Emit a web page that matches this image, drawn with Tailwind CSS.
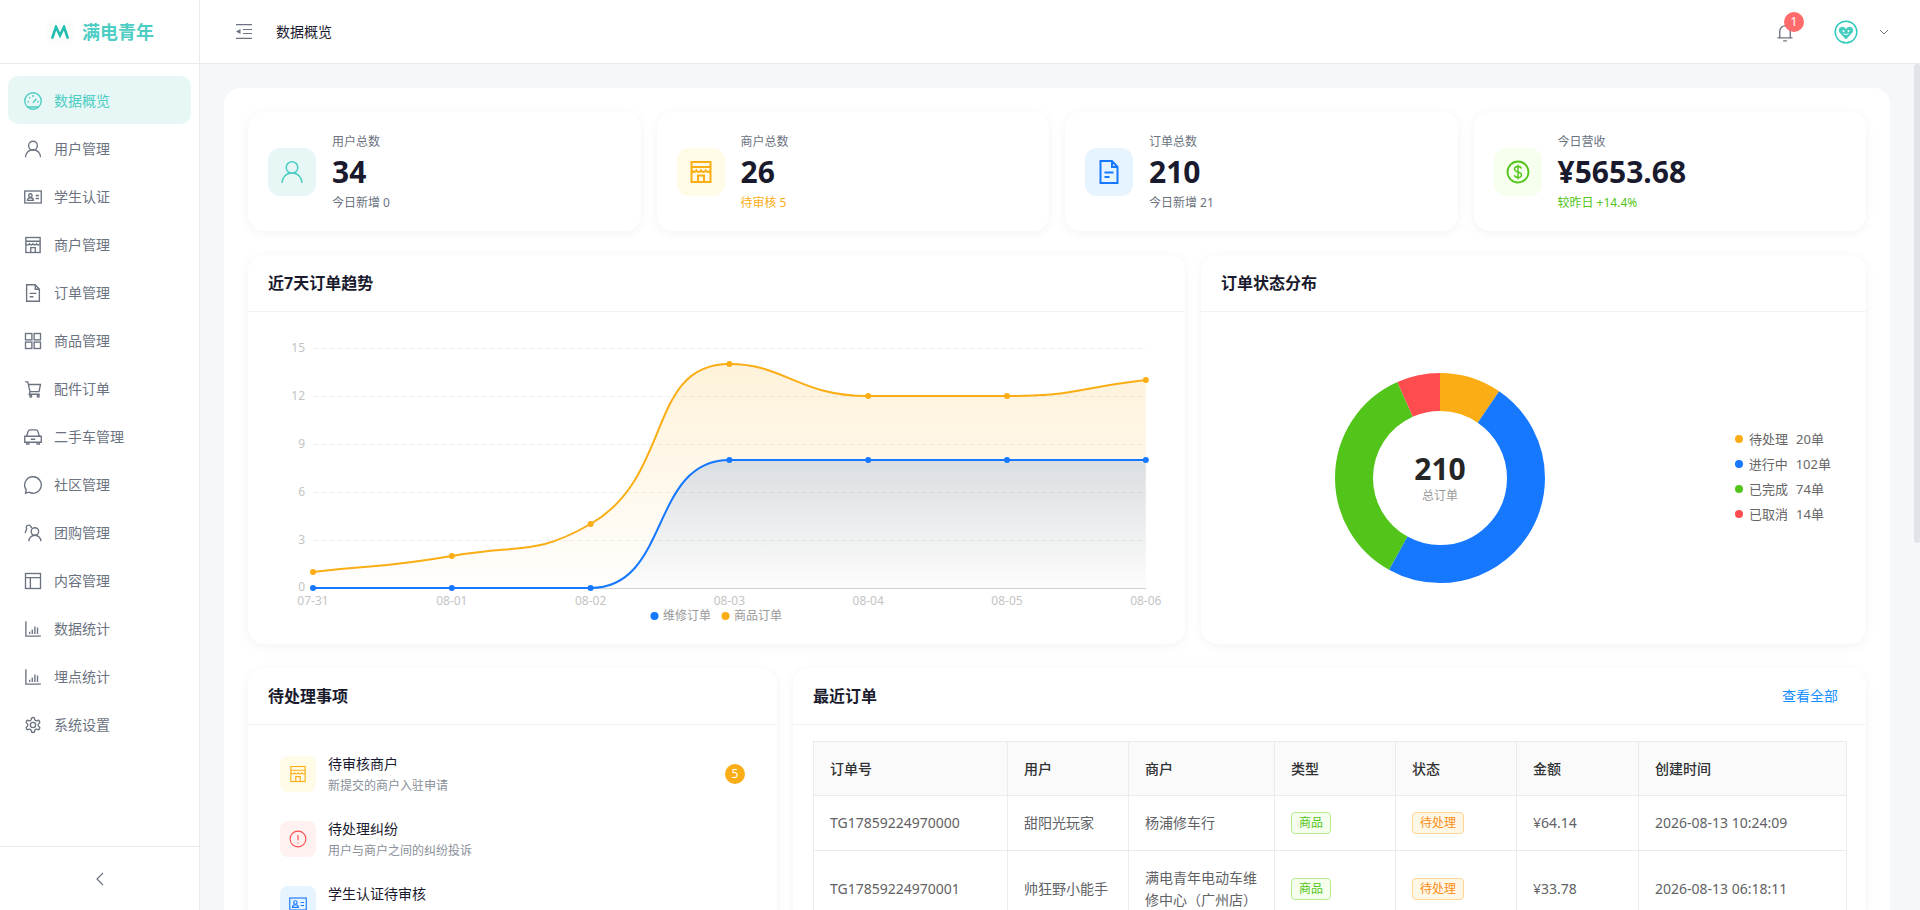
<!DOCTYPE html>
<html lang="zh-CN">
<head>
  <meta charset="UTF-8" />
  <meta name="viewport" content="width=device-width, initial-scale=1.0" />
  <title>满电青年 - 数据概览</title>
  <script src="https://cdn.jsdelivr.net/npm/@tailwindcss/browser@4"></script>
</head>
<body class="h-[910px] overflow-hidden flex bg-[#f5f7fb] font-['Noto_Sans','Noto_Sans_CJK_SC',sans-serif] text-[#1a1a2e]">

  <!-- shared icons -->
  <svg class="hidden" xmlns="http://www.w3.org/2000/svg">
    <symbol id="i-user" viewBox="0 0 24 24"><circle cx="12" cy="7.500" r="5.800"/><path d="M2 23c0-5.500 4-10 10-10s10 4.500 10 10"/></symbol>
    <symbol id="i-card" viewBox="0 0 24 24"><rect x="1" y="4" width="22" height="16"/><circle cx="8.500" cy="10" r="2.300"/><path d="M4.500 16.500c0-2.200 1.800-3.500 4-3.500s4 1.300 4 3.500zM15.500 10h4.500M15.500 14h4.500"/></symbol>
    <symbol id="i-shop" viewBox="0 0 24 24"><rect x="2.500" y="2" width="19" height="20"/><path d="M2.500 7h19M2.500 10.500c1.700 2 3.500 2 4.800 0 1.200 2 3.500 2 4.700 0 1.200 2 3.500 2 4.700 0 1.300 2 3.100 2 4.800 0M9 22v-6.500h6V22"/></symbol>
    <symbol id="i-doc" viewBox="0 0 24 24"><path d="M3.500 1h11.500l5.500 6v16h-17zM15 1v6h5.500M7.500 12.500h9M7.500 17h5"/></symbol>
    <symbol id="i-bars" viewBox="0 0 24 24"><path d="M2.500 1.500V21.500h20M7.500 18.500v-3M11 18.500v-6M14.500 18.500V8.500M18 18.500V10"/></symbol>
  </svg>

  <!-- sidebar -->
  <aside class="w-[200px] h-full shrink-0 bg-white border-r border-[#e8eaee] flex flex-col">
    <div class="h-[64px] shrink-0 border-b border-[#e8eaee] flex items-center pl-[47px] gap-[9px]">
      <div class="w-[26px] h-[26px] rounded-md bg-[#fbfdfb] flex items-center justify-center">
        <svg class="w-[18px] h-[14px]" viewBox="0 0 18 14" fill="none" stroke="#20bdb0" stroke-width="2.600"><path d="M1 13.500 5 2l4 8.500L13 2l4 11.500"/></svg>
      </div>
      <span class="text-lg font-bold text-[#4ecdc4]">满电青年</span>
    </div>
    <nav class="flex flex-col px-2 pt-3 text-sm text-[#6b7280]">
      <a class="h-12 pt-[2px] px-4 flex items-center gap-3 rounded-[10px] bg-[#e6f7f5] text-[#4ecdc4]">
        <svg class="w-[18px] h-[18px]" viewBox="0 0 24 24" fill="none" stroke="currentColor" stroke-width="1.800"><circle cx="12" cy="12" r="11"/><path d="M4.500 20h15M12 14.500l4.500-5.500M4.500 13h2M7 7l1.500 1.500M12 4v2.500M17.500 13h2"/></svg>
        数据概览
      </a>
      <a class="h-12 pt-[2px] px-4 flex items-center gap-3">
        <svg class="w-[18px] h-[18px]" fill="none" stroke="currentColor" stroke-width="1.800"><use href="#i-user"/></svg>用户管理
      </a>
      <a class="h-12 pt-[2px] px-4 flex items-center gap-3">
        <svg class="w-[18px] h-[18px]" fill="none" stroke="currentColor" stroke-width="1.800"><use href="#i-card"/></svg>学生认证
      </a>
      <a class="h-12 pt-[2px] px-4 flex items-center gap-3">
        <svg class="w-[18px] h-[18px]" fill="none" stroke="currentColor" stroke-width="1.800"><use href="#i-shop"/></svg>商户管理
      </a>
      <a class="h-12 pt-[2px] px-4 flex items-center gap-3">
        <svg class="w-[18px] h-[18px]" fill="none" stroke="currentColor" stroke-width="1.800"><use href="#i-doc"/></svg>订单管理
      </a>
      <a class="h-12 pt-[2px] px-4 flex items-center gap-3">
        <svg class="w-[18px] h-[18px]" viewBox="0 0 24 24" fill="none" stroke="currentColor" stroke-width="1.800"><rect x="2" y="2" width="8.500" height="8.500"/><rect x="13.500" y="2" width="8.500" height="8.500"/><rect x="2" y="13.500" width="8.500" height="8.500"/><rect x="13.500" y="13.500" width="8.500" height="8.500"/></svg>商品管理
      </a>
      <a class="h-12 pt-[2px] px-4 flex items-center gap-3">
        <svg class="w-[18px] h-[18px]" viewBox="0 0 24 24" fill="none" stroke="currentColor" stroke-width="1.800"><path d="M1.500 2.500h3.500l3 13h12l2-9.500H6M8 15.500l-1 3.500h14"/><circle cx="9" cy="21.500" r="1.300"/><circle cx="19" cy="21.500" r="1.300"/></svg>配件订单
      </a>
      <a class="h-12 pt-[2px] px-4 flex items-center gap-3">
        <svg class="w-[18px] h-[18px]" viewBox="0 0 24 24" fill="none" stroke="currentColor" stroke-width="1.800"><path d="M1 11h22v8H1zM3.500 11l2-6.500C6 3 7 2.500 8 2.500h8c1 0 2 .5 2.500 2l2 6.500M3.500 19v2.500h3V19M17.500 19v2.500h3V19M9 15h6"/></svg>二手车管理
      </a>
      <a class="h-12 pt-[2px] px-4 flex items-center gap-3">
        <svg class="w-[18px] h-[18px]" viewBox="0 0 24 24" fill="none" stroke="currentColor" stroke-width="1.800"><path d="M12 1a11 11 0 1 1-5.500 20.500L2 23l1-4.500A11 11 0 0 1 12 1z"/><path d="M7.500 12h.01M12 12h.01M16.500 12h.01" stroke-width="2.200"/></svg>社区管理
      </a>
      <a class="h-12 pt-[2px] px-4 flex items-center gap-3">
        <svg class="w-[18px] h-[18px]" viewBox="0 0 24 24" fill="none" stroke="currentColor" stroke-width="1.800"><circle cx="14.500" cy="10" r="5"/><path d="M6.500 23c0-4.500 3.500-8 8-8s8 3.500 8 8M10 5.500C9.500 3 8 1.500 6 1.500 3.500 1.500 2.500 4 3.500 6.500L1.500 12"/></svg>团购管理
      </a>
      <a class="h-12 pt-[2px] px-4 flex items-center gap-3">
        <svg class="w-[18px] h-[18px]" viewBox="0 0 24 24" fill="none" stroke="currentColor" stroke-width="1.800"><rect x="2" y="2" width="20" height="20"/><path d="M2 7.500h20M8.500 7.500V22"/></svg>内容管理
      </a>
      <a class="h-12 pt-[2px] px-4 flex items-center gap-3">
        <svg class="w-[18px] h-[18px]" fill="none" stroke="currentColor" stroke-width="1.800"><use href="#i-bars"/></svg>数据统计
      </a>
      <a class="h-12 pt-[2px] px-4 flex items-center gap-3">
        <svg class="w-[18px] h-[18px]" fill="none" stroke="currentColor" stroke-width="1.800"><use href="#i-bars"/></svg>埋点统计
      </a>
      <a class="h-12 pt-[2px] px-4 flex items-center gap-3">
        <svg class="w-[18px] h-[18px]" viewBox="0 0 24 24" fill="none" stroke="currentColor" stroke-width="1.800"><path d="M12.220 2h-.44a2 2 0 0 0-2 2v.18a2 2 0 0 1-1 1.730l-.43.25a2 2 0 0 1-2 0l-.15-.08a2 2 0 0 0-2.730.73l-.22.38a2 2 0 0 0 .73 2.730l.15.1a2 2 0 0 1 1 1.720v.51a2 2 0 0 1-1 1.740l-.15.09a2 2 0 0 0-.73 2.730l.22.38a2 2 0 0 0 2.730.73l.15-.08a2 2 0 0 1 2 0l.43.25a2 2 0 0 1 1 1.730V20a2 2 0 0 0 2 2h.44a2 2 0 0 0 2-2v-.18a2 2 0 0 1 1-1.730l.43-.25a2 2 0 0 1 2 0l.15.08a2 2 0 0 0 2.730-.73l.22-.39a2 2 0 0 0-.73-2.730l-.15-.08a2 2 0 0 1-1-1.740v-.5a2 2 0 0 1 1-1.740l.15-.09a2 2 0 0 0 .73-2.730l-.22-.38a2 2 0 0 0-2.730-.73l-.15.08a2 2 0 0 1-2 0l-.43-.25a2 2 0 0 1-1-1.730V4a2 2 0 0 0-2-2z"/><circle cx="12" cy="12" r="3.500"/></svg>系统设置
      </a>
    </nav>
    <div class="mt-auto h-[64px] border-t border-[#e8eaee] flex items-center justify-center text-[#6b7280]">
      <svg class="w-4 h-4" viewBox="0 0 16 16" fill="none" stroke="currentColor" stroke-width="1.200"><path d="M11 2 5 8l6 6"/></svg>
    </div>
  </aside>

  <div class="flex-1 min-w-0 h-full flex flex-col">
    <!-- header -->
    <header class="h-[64px] shrink-0 bg-white border-b border-[#e8eaee] flex items-center pl-9 pr-[30px]">
      <svg class="w-4 h-[15px]" viewBox="0 0 16 15" fill="none" stroke="#6b7280" stroke-width="1.200"><path d="M0 .6h16M7 5.500h9M7 9.500h9M0 14.400h16"/><path d="M4.500 5v5L0 7.500z" fill="#6b7280" stroke="none"/></svg>
      <span class="ml-6 text-sm">数据概览</span>
      <div class="ml-auto relative w-[18px] h-[18px] mt-[2px] text-[#6b7280]">
        <svg class="w-[18px] h-[18px]" viewBox="0 0 24 24" fill="none" stroke="currentColor" stroke-width="1.800"><path d="M5 18V9.500a7 7 0 0 1 14 0V18M2 18.500h20M9.500 22.500h5"/></svg>
        <span class="absolute -top-[12px] left-[8px] w-5 h-5 rounded-full bg-[#ff6b6b] text-white text-xs flex items-center justify-center">1</span>
      </div>
      <svg class="ml-[40px] w-[24px] h-[24px]" viewBox="0 0 24 24"><circle cx="12" cy="12" r="10.800" fill="#fff" stroke="#2cc8bb" stroke-width="1.400"/><path d="M12 19.500 5.500 12.500c-2-3 1-6.500 3.800-5.500 1.300.4 2.200 1.200 2.700 2 .5-.8 1.400-1.600 2.700-2 2.800-1 5.800 2.500 3.800 5.500z" fill="#45cdbf"/><circle cx="9.500" cy="11" r="1" fill="#fff"/><circle cx="14.500" cy="11" r="1" fill="#fff"/><path d="M9.500 13.500c1.500 1.300 3.500 1.300 5 0" fill="none" stroke="#fff"/></svg>
      <svg class="ml-[20px] w-3 h-3" viewBox="0 0 12 12" fill="none" stroke="#6b7280" stroke-width="1"><path d="M2 4l4 4 4-4"/></svg>
    </header>

    <div class="flex-1 min-h-0 flex">
      <main class="flex-1 min-w-0 p-6 overflow-hidden">
        <div class="bg-white rounded-2xl p-6">

          <!-- stat cards -->
          <div class="grid grid-cols-4 gap-4 mb-6">
            <div class="h-[119px] rounded-2xl bg-white shadow-[0_2px_12px_rgba(0,0,0,0.05)] flex items-center px-5 gap-4">
              <div class="w-12 h-12 rounded-xl bg-[#e6f7f5] text-[#4ecdc4] flex items-center justify-center">
                <svg class="w-6 h-6" fill="none" stroke="currentColor" stroke-width="1.500"><use href="#i-user"/></svg>
              </div>
              <div class="flex flex-col">
                <span class="text-xs leading-[18px] mt-[1px] text-[#6b7280]">用户总数</span>
                <span class="text-[30px] leading-9 mt-[3px] font-bold">34</span>
                <span class="text-xs leading-[18px] mt-1 text-[#6b7280]">今日新增 0</span>
              </div>
            </div>
            <div class="h-[119px] rounded-2xl bg-white shadow-[0_2px_12px_rgba(0,0,0,0.05)] flex items-center px-5 gap-4">
              <div class="w-12 h-12 rounded-xl bg-[#fffbe6] text-[#faad14] flex items-center justify-center">
                <svg class="w-6 h-6" fill="none" stroke="currentColor" stroke-width="2"><use href="#i-shop"/></svg>
              </div>
              <div class="flex flex-col">
                <span class="text-xs leading-[18px] mt-[1px] text-[#6b7280]">商户总数</span>
                <span class="text-[30px] leading-9 mt-[3px] font-bold">26</span>
                <span class="text-xs leading-[18px] mt-1 text-[#faad14]">待审核 5</span>
              </div>
            </div>
            <div class="h-[119px] rounded-2xl bg-white shadow-[0_2px_12px_rgba(0,0,0,0.05)] flex items-center px-5 gap-4">
              <div class="w-12 h-12 rounded-xl bg-[#e6f4ff] text-[#1677ff] flex items-center justify-center">
                <svg class="w-6 h-6" fill="none" stroke="currentColor" stroke-width="2"><use href="#i-doc"/></svg>
              </div>
              <div class="flex flex-col">
                <span class="text-xs leading-[18px] mt-[1px] text-[#6b7280]">订单总数</span>
                <span class="text-[30px] leading-9 mt-[3px] font-bold">210</span>
                <span class="text-xs leading-[18px] mt-1 text-[#6b7280]">今日新增 21</span>
              </div>
            </div>
            <div class="h-[119px] rounded-2xl bg-white shadow-[0_2px_12px_rgba(0,0,0,0.05)] flex items-center px-5 gap-4">
              <div class="w-12 h-12 rounded-xl bg-[#f6ffed] text-[#52c41a] flex items-center justify-center">
                <svg class="w-6 h-6" viewBox="0 0 24 24" fill="none" stroke="currentColor" stroke-width="1.800"><circle cx="12" cy="12" r="10.500"/><path d="M15.500 8.500C15 7 13.500 6.500 12 6.500c-2 0-3.500 1-3.500 2.700 0 3.600 7 1.900 7 5.600 0 1.700-1.500 2.700-3.500 2.700-1.700 0-3.100-.7-3.600-2.200M12 4.500v15" stroke-width="1.400"/></svg>
              </div>
              <div class="flex flex-col">
                <span class="text-xs leading-[18px] mt-[1px] text-[#6b7280]">今日营收</span>
                <span class="text-[30px] leading-9 mt-[3px] font-bold">¥5653.68</span>
                <span class="text-xs leading-[18px] mt-1 text-[#52c41a]">较昨日 +14.4%</span>
              </div>
            </div>
          </div>

          <!-- charts -->
          <div class="grid grid-cols-[937px_665px] gap-4 mb-6">
            <section class="h-[389px] rounded-2xl bg-white shadow-[0_2px_12px_rgba(0,0,0,0.05)]">
              <h2 class="h-[57px] px-5 flex items-center border-b border-[#f0f2f5] text-base font-bold">近7天订单趋势</h2>
              <svg class="block w-[937px] h-[332px]" viewBox="248 312 937 332" font-size="12">
                <defs>
                  <linearGradient id="fillOrange" x1="0" y1="0" x2="0" y2="1"><stop offset="0" stop-color="#faad14" stop-opacity="0.16"/><stop offset="1" stop-color="#faad14" stop-opacity="0.01"/></linearGradient>
                  <linearGradient id="fillBlue" x1="0" y1="0" x2="0" y2="1"><stop offset="0" stop-color="#1b5cc0" stop-opacity="0.16"/><stop offset="1" stop-color="#1b5cc0" stop-opacity="0.01"/></linearGradient>
                </defs>
                <g stroke="#eeeeee" stroke-dasharray="5 3">
                  <path d="M313 348.500H1146M313 396.500H1146M313 444.500H1146M313 492.500H1146M313 540.500H1146"/>
                </g>
                <path d="M313 588.500H1146" stroke="#d0d0d0"/>
                <g fill="#c4c4c4" text-anchor="end">
                  <text x="305" y="352">15</text><text x="305" y="400">12</text><text x="305" y="448">9</text><text x="305" y="496">6</text><text x="305" y="544">3</text><text x="305" y="591">0</text>
                </g>
                <g fill="#c4c4c4" text-anchor="middle">
                  <text x="313" y="605">07-31</text><text x="451.800" y="605">08-01</text><text x="590.600" y="605">08-02</text><text x="729.400" y="605">08-03</text><text x="868.200" y="605">08-04</text><text x="1007" y="605">08-05</text><text x="1145.800" y="605">08-06</text>
                </g>
                <path d="M313 572C382.400 564 383.100 567.900 451.800 556C521.800 543.900 534.800 556 590.600 524C673.600 476.400 646.400 364 729.400 364C785.200 364 797.900 396 868.200 396C936.700 396 937.800 396 1007 396C1076.600 396 1076.400 388 1145.800 380V588H313Z" fill="url(#fillOrange)"/>
                <path d="M313 588L590.600 588C670.600 588 649.400 460 729.400 460L1145.800 460V588H313Z" fill="url(#fillBlue)"/>
                <path d="M313 572C382.400 564 383.100 567.900 451.800 556C521.800 543.900 534.800 556 590.600 524C673.600 476.400 646.400 364 729.400 364C785.200 364 797.900 396 868.200 396C936.700 396 937.800 396 1007 396C1076.600 396 1076.400 388 1145.800 380" fill="none" stroke="#faad14" stroke-width="2"/>
                <path d="M313 588L590.600 588C670.600 588 649.400 460 729.400 460L1145.800 460" fill="none" stroke="#1677ff" stroke-width="2"/>
                <g fill="#faad14"><circle cx="313" cy="572" r="3"/><circle cx="451.800" cy="556" r="3"/><circle cx="590.600" cy="524" r="3"/><circle cx="729.400" cy="364" r="3"/><circle cx="868.200" cy="396" r="3"/><circle cx="1007" cy="396" r="3"/><circle cx="1145.800" cy="380" r="3"/></g>
                <g fill="#1677ff"><circle cx="313" cy="588" r="3"/><circle cx="451.800" cy="588" r="3"/><circle cx="590.600" cy="588" r="3"/><circle cx="729.400" cy="460" r="3"/><circle cx="868.200" cy="460" r="3"/><circle cx="1007" cy="460" r="3"/><circle cx="1145.800" cy="460" r="3"/></g>
                <circle cx="654.500" cy="616" r="4" fill="#1677ff"/><text x="663" y="620" fill="#999999">维修订单</text>
                <circle cx="725.500" cy="616" r="4" fill="#faad14"/><text x="734" y="620" fill="#999999">商品订单</text>
              </svg>
            </section>

            <section class="h-[389px] rounded-2xl bg-white shadow-[0_2px_12px_rgba(0,0,0,0.05)]">
              <h2 class="h-[57px] px-5 flex items-center border-b border-[#f0f2f5] text-base font-bold">订单状态分布</h2>
              <div class="h-[332px] flex items-center pl-[133px] pr-[35px] justify-between">
                <div class="relative w-[212px] h-[212px] -mt-[1px]">
                  <svg class="w-full h-full -rotate-90" viewBox="0 0 212 212" fill="none" stroke-width="38">
                    <circle cx="106" cy="106" r="86" pathLength="210" stroke="#faad14" stroke-dasharray="20 190" stroke-dashoffset="0"/>
                    <circle cx="106" cy="106" r="86" pathLength="210" stroke="#1677ff" stroke-dasharray="102 108" stroke-dashoffset="-20"/>
                    <circle cx="106" cy="106" r="86" pathLength="210" stroke="#52c41a" stroke-dasharray="74 136" stroke-dashoffset="-122"/>
                    <circle cx="106" cy="106" r="86" pathLength="210" stroke="#ff4d4f" stroke-dasharray="14 196" stroke-dashoffset="-196"/>
                  </svg>
                  <div class="absolute inset-0 flex flex-col items-center justify-center">
                    <span class="text-[30px] leading-9 font-bold text-[#262626]">210</span>
                    <span class="text-xs leading-[18px] text-[#999999]">总订单</span>
                  </div>
                </div>
                <ul class="flex flex-col gap-[5px] -mt-[3px] text-[13px] leading-5 text-[#666666] w-[96px] whitespace-nowrap">
                  <li class="flex items-center"><i class="w-2 h-2 rounded-full bg-[#faad14] mr-[6px]"></i>待处理<span class="ml-2">20单</span></li>
                  <li class="flex items-center"><i class="w-2 h-2 rounded-full bg-[#1677ff] mr-[6px]"></i>进行中<span class="ml-2">102单</span></li>
                  <li class="flex items-center"><i class="w-2 h-2 rounded-full bg-[#52c41a] mr-[6px]"></i>已完成<span class="ml-2">74单</span></li>
                  <li class="flex items-center"><i class="w-2 h-2 rounded-full bg-[#ff4d4f] mr-[6px]"></i>已取消<span class="ml-2">14单</span></li>
                </ul>
              </div>
            </section>
          </div>

          <!-- bottom -->
          <div class="grid grid-cols-[529px_1073px] gap-4 items-start">
            <section class="rounded-2xl bg-white shadow-[0_2px_12px_rgba(0,0,0,0.05)]">
              <h2 class="h-[57px] px-5 flex items-center border-b border-[#f0f2f5] text-base font-bold">待处理事项</h2>
              <div class="p-4">
                <div class="h-[65px] px-4 flex items-center gap-3">
                  <div class="w-9 h-9 rounded-lg bg-[#fffbe6] text-[#faad14] flex items-center justify-center">
                    <svg class="w-[18px] h-[18px]" fill="none" stroke="currentColor" stroke-width="1.500"><use href="#i-shop"/></svg>
                  </div>
                  <div class="flex-1 pt-[2px]">
                    <p class="text-sm leading-[22px]">待审核商户</p>
                    <p class="text-xs leading-5 mt-[1px] text-[#8a8f99]">新提交的商户入驻申请</p>
                  </div>
                  <span class="w-5 h-5 rounded-full bg-[#faad14] text-white text-xs flex items-center justify-center">5</span>
                </div>
                <div class="h-[65px] px-4 flex items-center gap-3">
                  <div class="w-9 h-9 rounded-lg bg-[#fff1f0] text-[#ff4d4f] flex items-center justify-center">
                    <svg class="w-[18px] h-[18px]" viewBox="0 0 24 24" fill="none" stroke="currentColor" stroke-width="1.500"><circle cx="12" cy="12" r="10.500"/><path d="M12 6.500v7M12 16.500v1.500"/></svg>
                  </div>
                  <div class="flex-1 pt-[2px]">
                    <p class="text-sm leading-[22px]">待处理纠纷</p>
                    <p class="text-xs leading-5 mt-[1px] text-[#8a8f99]">用户与商户之间的纠纷投诉</p>
                  </div>
                </div>
                <div class="h-[65px] px-4 flex items-center gap-3">
                  <div class="w-9 h-9 rounded-lg bg-[#e6f4ff] text-[#1677ff] flex items-center justify-center">
                    <svg class="w-[18px] h-[18px]" fill="none" stroke="currentColor" stroke-width="1.500"><use href="#i-card"/></svg>
                  </div>
                  <div class="flex-1 pt-[2px]">
                    <p class="text-sm leading-[22px]">学生认证待审核</p>
                    <p class="h-5 mt-[1px]"></p>
                  </div>
                </div>
              </div>
            </section>

            <section class="rounded-2xl bg-white shadow-[0_2px_12px_rgba(0,0,0,0.05)]">
              <div class="h-[57px] pl-5 pr-7 flex items-center justify-between border-b border-[#f0f2f5]">
                <h2 class="text-base font-bold">最近订单</h2>
                <a class="text-sm text-[#1890ff]">查看全部</a>
              </div>
              <div class="px-5 pt-4">
                <table class="w-[1033px] table-fixed border-collapse text-sm leading-[22px] text-[#606266]">
                  <colgroup><col class="w-[194px]"><col class="w-[121px]"><col class="w-[146px]"><col class="w-[121px]"><col class="w-[121px]"><col class="w-[122px]"><col class="w-[208px]"></colgroup>
                  <thead class="bg-[#fafafa] text-[#303133] text-left">
                    <tr class="h-[54px]">
                      <th class="font-medium px-4 py-0 border border-[#ebebeb]">订单号</th>
                      <th class="font-medium px-4 py-0 border border-[#ebebeb]">用户</th>
                      <th class="font-medium px-4 py-0 border border-[#ebebeb]">商户</th>
                      <th class="font-medium px-4 py-0 border border-[#ebebeb]">类型</th>
                      <th class="font-medium px-4 py-0 border border-[#ebebeb]">状态</th>
                      <th class="font-medium px-4 py-0 border border-[#ebebeb]">金额</th>
                      <th class="font-medium px-4 py-0 border border-[#ebebeb]">创建时间</th>
                    </tr>
                  </thead>
                  <tbody>
                    <tr>
                      <td class="p-4 border border-[#ebebeb]">TG17859224970000</td>
                      <td class="p-4 border border-[#ebebeb]">甜阳光玩家</td>
                      <td class="p-4 border border-[#ebebeb]">杨浦修车行</td>
                      <td class="p-4 border border-[#ebebeb]"><span class="block w-fit h-[22px] px-[7px] rounded border border-[#b7eb8f] bg-[#f6ffed] text-[#52c41a] text-xs leading-5">商品</span></td>
                      <td class="p-4 border border-[#ebebeb]"><span class="block w-fit h-[22px] px-[7px] rounded border border-[#ffd591] bg-[#fff7e6] text-[#fa8c16] text-xs leading-5">待处理</span></td>
                      <td class="p-4 border border-[#ebebeb]">¥64.14</td>
                      <td class="p-4 border border-[#ebebeb]">2026-08-13 10:24:09</td>
                    </tr>
                    <tr>
                      <td class="p-4 border border-[#ebebeb]">TG17859224970001</td>
                      <td class="p-4 border border-[#ebebeb]">帅狂野小能手</td>
                      <td class="p-4 border border-[#ebebeb]">满电青年电动车维修中心（广州店）</td>
                      <td class="p-4 border border-[#ebebeb]"><span class="block w-fit h-[22px] px-[7px] rounded border border-[#b7eb8f] bg-[#f6ffed] text-[#52c41a] text-xs leading-5">商品</span></td>
                      <td class="p-4 border border-[#ebebeb]"><span class="block w-fit h-[22px] px-[7px] rounded border border-[#ffd591] bg-[#fff7e6] text-[#fa8c16] text-xs leading-5">待处理</span></td>
                      <td class="p-4 border border-[#ebebeb]">¥33.78</td>
                      <td class="p-4 border border-[#ebebeb]">2026-08-13 06:18:11</td>
                    </tr>
                  </tbody>
                </table>
              </div>
            </section>
          </div>

        </div>
      </main>
      <!-- scrollbar -->
      <div class="w-[6px] shrink-0">
        <div class="h-[479px] rounded-[3px] bg-[#e0e3e8]"></div>
      </div>
    </div>
  </div>

</body>
</html>
